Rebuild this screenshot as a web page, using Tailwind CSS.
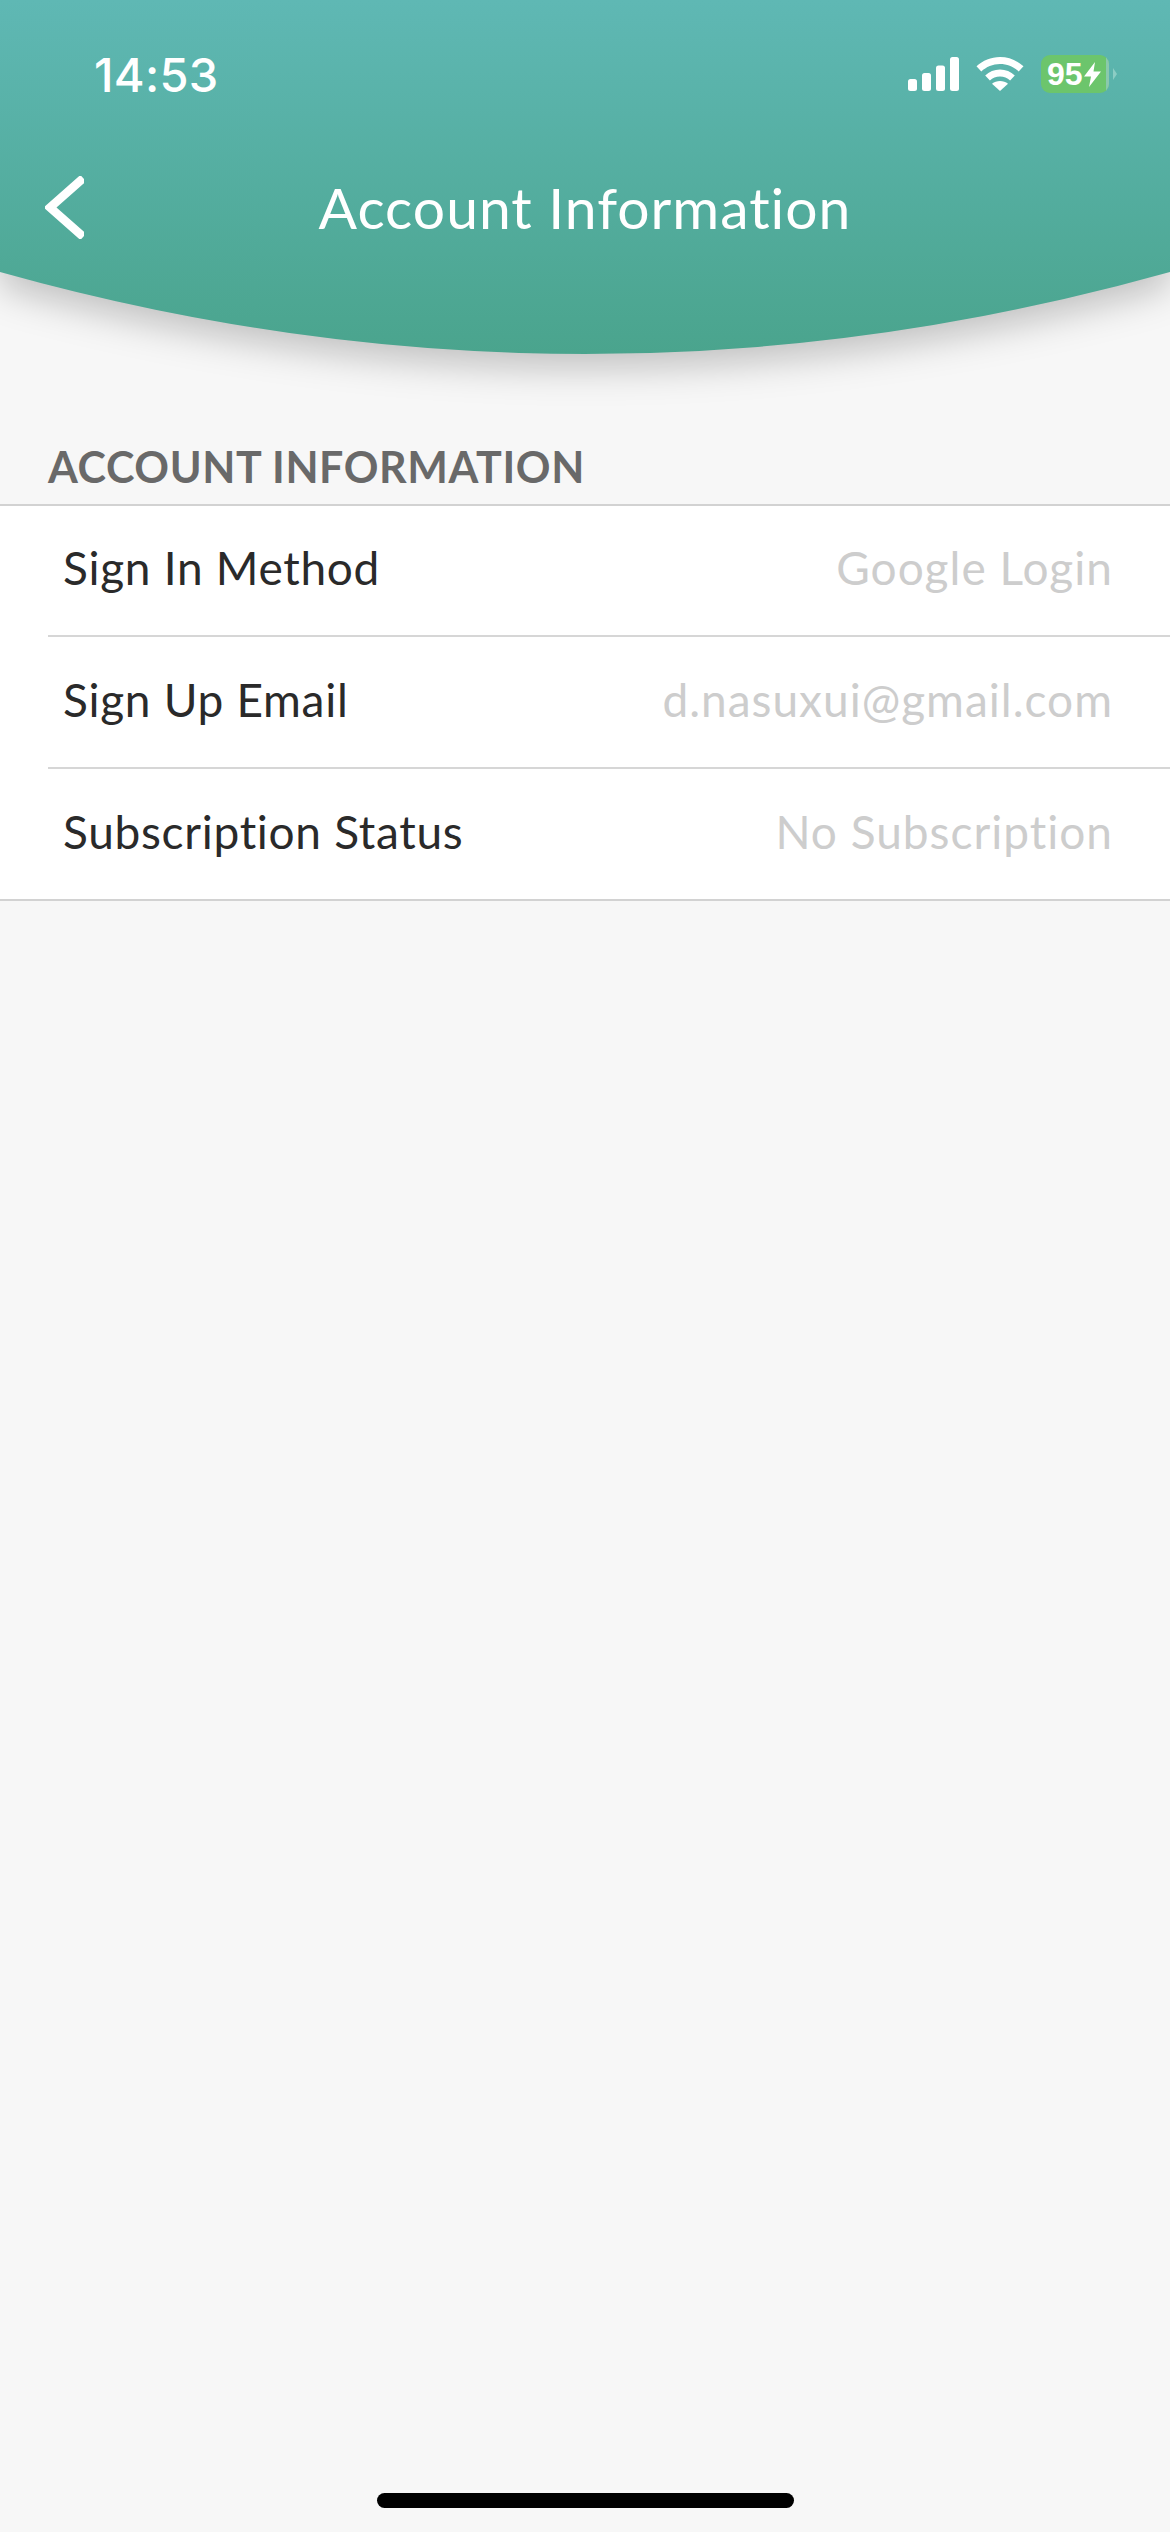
<!DOCTYPE html>
<html lang="en">
<head>
    <meta charset="UTF-8">
    <meta name="viewport" content="width=device-width, initial-scale=1.0">
    <title>Account Information</title>
    <script src="https://cdn.jsdelivr.net/npm/@tailwindcss/browser@4"></script>
</head>
<body class="bg-[#f7f7f7]">
    <div class="w-[1170px] h-[2532px] flex flex-col bg-[#f7f7f7] font-['Lato',sans-serif] overflow-hidden">
        <!-- Curved header -->
        <div class="relative h-[354px] shrink-0">
            <svg class="absolute top-0 left-0 w-[1170px] h-[354px] overflow-visible drop-shadow-[0_14px_18px_rgba(0,0,0,0.22)]" viewBox="0 0 1170 354">
                <defs>
                    <linearGradient id="headerFill" x1="0" y1="0" x2="0" y2="1">
                        <stop offset="0" stop-color="#5fb8b4"/>
                        <stop offset="1" stop-color="#4aa48d"/>
                    </linearGradient>
                </defs>
                <path d="M0 0H1170V272Q585 436 0 272Z" fill="url(#headerFill)"/>
            </svg>

            <!-- Status bar -->
            <div class="relative flex items-center justify-between h-[74px] pt-[37px] pl-[94px] pr-[55px] box-content">
                <span class="font-['Inter',sans-serif] text-[47px] font-medium leading-none tracking-[0.3px] text-white">14:53</span>
                <div class="flex items-center translate-x-[2px]">
                    <svg class="w-[51px] h-[34px]" viewBox="0 0 51 34" fill="#fff">
                        <rect x="0" y="22" width="9" height="12" rx="2.5"/>
                        <rect x="14" y="16" width="9" height="18" rx="2.5"/>
                        <rect x="28" y="8.5" width="9" height="25.5" rx="2.5"/>
                        <rect x="42" y="0" width="9" height="34" rx="2.5"/>
                    </svg>
                    <svg class="w-[48px] h-[34px] ml-[17px]" viewBox="0 0 48 34" fill="#fff">
                        <path d="M24 0C15 0 6.800 3.500 0.500 9.300L5.300 14.600C10.200 10 16.800 7.100 24 7.100S37.800 10 42.700 14.600L47.500 9.300C41.200 3.500 33 0 24 0Z"/>
                        <path d="M24 12.500C18.300 12.500 13.100 14.700 9.200 18.400L13.900 23.500C16.600 21 20.100 19.500 24 19.500S31.400 21 34.100 23.500L38.800 18.400C34.900 14.700 29.700 12.500 24 12.500Z"/>
                        <path d="M24 34L32 26.800C29.800 25 27 24 24 24S18.200 25 16 26.800Z"/>
                    </svg>
                    <div class="relative w-[68px] h-[38px] ml-[17px] rounded-[9px] bg-[#6cc56c] overflow-hidden flex items-center pl-[6px]">
                        <span class="font-['Liberation_Sans',sans-serif] text-[32px] font-bold leading-none text-white">95</span>
                        <svg class="w-[17px] h-[25px] ml-[1px]" viewBox="0 0 17 25" fill="#fff">
                            <path d="M11 0L0 14.500H7L5 25L17 9.500H9.500Z"/>
                        </svg>
                        <div class="absolute top-0 right-0 w-[3px] h-full bg-[#8ac9ad]"></div>
                    </div>
                    <div class="w-0 h-0 ml-[4px] border-y-[6px] border-y-transparent border-l-[4px] border-l-[#8ccdc4]"></div>
                </div>
            </div>

            <!-- Nav bar -->
            <div class="relative flex items-center justify-center h-[100px] mt-[46px]">
                <svg class="absolute left-[45px] top-[19px] w-[39px] h-[63px]" viewBox="0 0 39 63" fill="none" stroke="#fff" stroke-width="8.500" stroke-linecap="square">
                    <path d="M35 5L5 31.500L35 58"/>
                </svg>
                <h1 class="text-[57px] font-normal leading-none tracking-[1px] text-white">Account Information</h1>
            </div>
        </div>

        <!-- Section -->
        <h2 class="mt-[88px] mb-[12px] pl-[48px] text-[43px] font-bold leading-[50px] tracking-[0.6px] text-[#696969]">ACCOUNT INFORMATION</h2>
        <div class="bg-white border-y-2 border-[#d2d2d2]">
            <div class="ml-[48px] h-[131px] pb-[5px] pl-[15px] pr-[57px] flex items-center justify-between border-b-2 border-[#d6d6d6]">
                <span class="text-[46px] leading-none tracking-[0.7px] text-[#2a2a2a]">Sign In Method</span>
                <span class="text-[46px] leading-none tracking-[1px] text-[#cdcdcd]">Google Login</span>
            </div>
            <div class="ml-[48px] h-[132px] pb-[5px] pl-[15px] pr-[57px] flex items-center justify-between border-b-2 border-[#d6d6d6]">
                <span class="text-[46px] leading-none tracking-[0.7px] text-[#2a2a2a]">Sign Up Email</span>
                <span class="text-[46px] leading-none tracking-[1px] text-[#cdcdcd]">d.nasuxui@gmail.com</span>
            </div>
            <div class="ml-[48px] h-[130px] pb-[5px] pl-[15px] pr-[57px] flex items-center justify-between">
                <span class="text-[46px] leading-none tracking-[0.7px] text-[#2a2a2a]">Subscription Status</span>
                <span class="text-[46px] leading-none tracking-[1px] text-[#cdcdcd]">No Subscription</span>
            </div>
        </div>

        <!-- Home indicator -->
        <div class="mt-auto mb-[24px] mx-auto w-[417px] h-[15px] rounded-full bg-black"></div>
    </div>
</body>
</html>
